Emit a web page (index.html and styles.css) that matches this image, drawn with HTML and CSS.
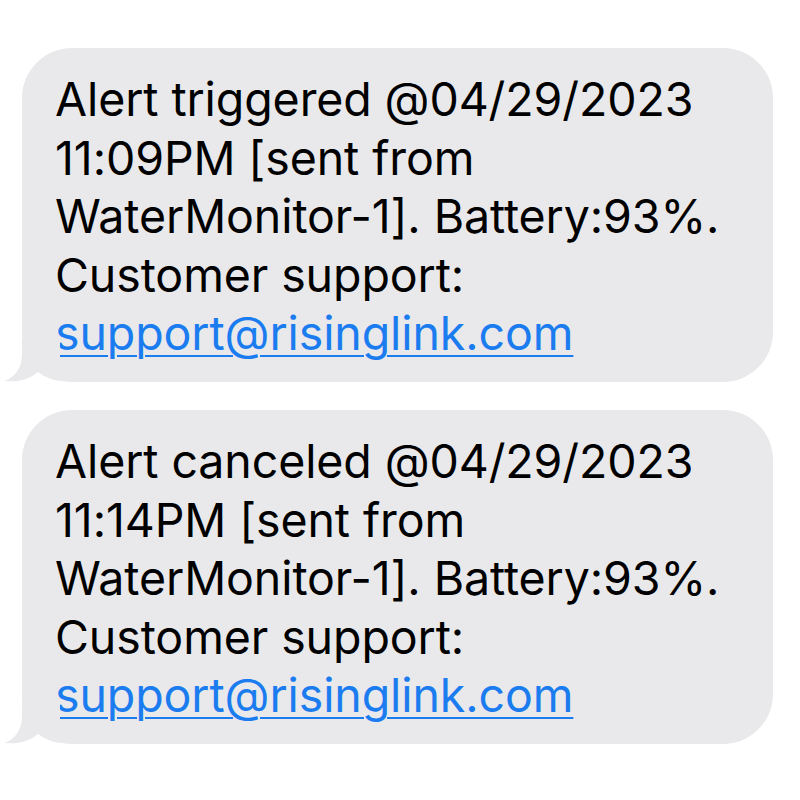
FILE: index.html
```html
<!DOCTYPE html>
<html>
<head>
<meta charset="utf-8">
<link rel="stylesheet" href="styles.css">
</head>
<body>
<div class="thread">
  <div class="bubble">
    <p class="msg">Alert triggered @04/29/2023<br>11:09PM [sent from<br>WaterMonitor-1]. Battery:93%.<br>Customer support:<br><a class="link" href="#">support@risinglink.com</a></p>
    <svg class="tail" width="60" height="44" viewBox="0 0 60 44"><path d="M22 0 L22 15 C22 30 14 38 5 42 C18 43.5 30 40 38 33 C45 38 52 41 60 42 L60 0 Z" fill="#e9e9eb"/></svg>
  </div>
  <div class="bubble">
    <p class="msg">Alert canceled @04/29/2023<br>11:14PM [sent from<br>WaterMonitor-1]. Battery:93%.<br>Customer support:<br><a class="link" href="#">support@risinglink.com</a></p>
    <svg class="tail" width="60" height="44" viewBox="0 0 60 44"><path d="M22 0 L22 15 C22 30 14 38 5 42 C18 43.5 30 40 38 33 C45 38 52 41 60 42 L60 0 Z" fill="#e9e9eb"/></svg>
  </div>
</div>
</body>
</html>
```
FILE: styles.css
```css
html, body {
  margin: 0;
  padding: 0;
  background: #ffffff;
}
.thread {
  display: flex;
  flex-direction: column;
  gap: 28px;
  padding: 48px 0 0 22px;
}
.bubble {
  position: relative;
  width: 751px;
  height: 334px;
  box-sizing: border-box;
  background: #e9e9eb;
  border-radius: 50px;
  padding: 22px 20px 0 33px;
}
.msg {
  margin: 0;
  font-family: Inter, "Liberation Sans", sans-serif;
  font-size: 46.5px;
  line-height: 58.5px;
  letter-spacing: -0.1px;
  color: #000000;
}
.link {
  color: #1b7cf0;
  text-decoration: underline;
  text-decoration-thickness: 2px;
  text-underline-offset: 5px;
}
.tail {
  position: absolute;
  left: -22px;
  bottom: -1px;
}
```
